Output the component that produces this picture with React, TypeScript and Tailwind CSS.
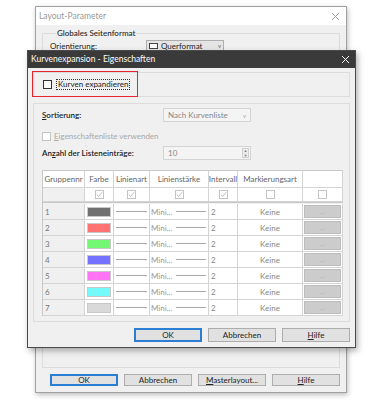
import type { ReactNode } from "react";

const font = { fontFamily: 'Lato, "Open Sans", sans-serif' };

function CloseX({ color }: { color: string }) {
  return (
    <svg width="9" height="9" viewBox="0 0 9 9">
      <path d="M1 1 L8 8 M8 1 L1 8" stroke={color} strokeWidth="1" />
    </svg>
  );
}

function Check({ checked = false, disabled = false }: { checked?: boolean; disabled?: boolean }) {
  return (
    <span
      className={
        "inline-flex h-[9px] w-[9px] shrink-0 items-center justify-center border bg-white " +
        (disabled ? "border-[#c4c4c4]" : "border-[#333333]")
      }
    >
      {checked && (
        <svg width="7" height="7" viewBox="0 0 7 7">
          <path d="M0.8 3.6 L2.7 5.4 L6.2 1.2" fill="none" stroke="#b4b4b4" strokeWidth="0.9" />
        </svg>
      )}
    </span>
  );
}

function Btn({ children, focus = false, className = "" }: { children: ReactNode; focus?: boolean; className?: string }) {
  return (
    <div
      className={
        "flex items-center justify-center bg-[#e1e1e1] text-[8px] text-[#222] " +
        (focus ? "border-2 border-[#2a7fd4] " : "border border-[#adadad] ") +
        className
      }
    >
      {children}
    </div>
  );
}

const swatches = ["#707070", "#ff7373", "#73f873", "#7373ff", "#ff73f5", "#73fbfb", "#d9d9d9"];
const cols = "grid grid-cols-[42px_29px_36px_59px_29px_65px_40px]";

function Table() {
  const cell = "border-r border-b border-[#d4d4d4]";
  return (
    <div className="w-[301px] border-l border-t border-[#c8c8c8] text-[8px] text-[#666]">
      <div className={cols + " h-[17px]"}>
        {["Gruppennr", "Farbe", "Linienart", "Linienstärke", "Intervall", "Markierungsart", ""].map((h, i) => (
          <div key={i} className={cell + " flex items-center justify-center overflow-hidden whitespace-nowrap bg-white"}>
            {h}
          </div>
        ))}
      </div>
      <div className={cols + " h-[15px] border-b border-[#c8c8c8]"}>
        <div className={cell + " bg-[#f0f0f0]"} />
        {[true, true, true, true, false, false].map((c, i) => (
          <div key={i} className={cell + " flex items-center justify-center bg-white"}>
            <Check checked={c} disabled />
          </div>
        ))}
      </div>
      <div className="h-[1px]" />
      {swatches.map((c, i) => (
        <div key={i} className={cols + " h-[16px]"}>
          <div className={cell + " flex items-center bg-[#f0f0f0] pl-[2px] text-[#777]"}>{i + 1}</div>
          <div className={cell + " flex items-center justify-center bg-white"}>
            <span className="h-[10px] w-[24px] border border-[#c8c8c8]" style={{ backgroundColor: c }} />
          </div>
          <div className={cell + " flex items-center bg-white px-[2px]"}>
            <span className="h-px w-full bg-[#a8a8a8]" />
          </div>
          <div className={cell + " flex items-center gap-[4px] bg-white pl-[1px] pr-[2px] text-[#999]"}>
            <span>Mini...</span>
            <span className="h-px flex-1 bg-[#a8a8a8]" />
          </div>
          <div className={cell + " flex items-center bg-white pl-[2px] text-[#888]"}>2</div>
          <div className={cell + " flex items-center justify-center bg-white text-[#888]"}>Keine</div>
          <div className={cell + " flex items-center justify-center bg-white px-[1px] py-[1px]"}>
            <span className="flex h-full w-full items-center justify-center border border-[#bdbdbd] bg-[#cccccc] text-[6px] text-[#aaa]">
              ...
            </span>
          </div>
        </div>
      ))}
    </div>
  );
}

export default function App() {
  return (
    <div className="relative h-[400px] w-[378px] overflow-hidden bg-white text-[8px] text-[#222]" style={font}>
      {/* back window */}
      <div className="absolute left-[35px] top-[6px] flex h-[387px] w-[312px] flex-col border border-[#a0a0a0] bg-[#f0f0f0] shadow-[1px_2px_5px_rgba(0,0,0,0.25)]">
        <div className="flex h-[18px] shrink-0 items-center justify-between bg-white pl-[3px] pr-[6px] text-[8.5px] text-[#999]">
          <span>Layout-Parameter</span>
          <CloseX color="#999" />
        </div>
        <fieldset className="mx-[6px] mt-[2px] flex h-[341px] flex-col border border-[#dcdcdc] px-[7px]">
          <legend className="ml-[6px] px-[1px] font-semibold text-[#333]">Globales Seitenformat</legend>
          <div className="mt-[1px] flex h-[11px] items-center leading-[10px]">
            <span className="w-[96px]">Orientierung:</span>
            <div className="flex h-[11px] w-[78px] items-center gap-[3px] border border-[#adadad] bg-[#e5e5e5] px-[2px]">
              <span className="h-[6px] w-[9px] border border-[#444] bg-white" />
              <span>Querformat</span>
              <span className="ml-auto text-[6px] text-[#666]">v</span>
            </div>
          </div>
          <div className="flex-1" />
          <div className="mb-[4px] flex h-[11px] items-center">
            <span className="w-[95px]">Nach Aktualisierung:</span>
            <div className="h-[11px] w-[174px] border border-[#d0d0d0] bg-[#f0f0f0]" />
            <Btn className="ml-[2px] h-[11px] w-[11px] !text-[6px]">—</Btn>
          </div>
        </fieldset>
        <div className="flex flex-1 items-center gap-[6px] pl-[14px]">
          <Btn focus className="h-[12px] w-[68px]">OK</Btn>
          <Btn className="h-[12px] w-[68px]">Abbrechen</Btn>
          <Btn className="h-[12px] w-[68px]">
            <span><u>M</u>asterlayout...</span>
          </Btn>
          <Btn className="h-[12px] w-[68px]">
            <span><u>H</u>ilfe</span>
          </Btn>
        </div>
      </div>

      {/* front window */}
      <div className="absolute left-[27px] top-[50px] flex h-[298px] w-[329px] flex-col border border-[#4a4a4a] bg-[#f0f0f0] shadow-[2px_3px_6px_rgba(0,0,0,0.3)]">
        <div className="flex h-[17px] shrink-0 items-center justify-between bg-[#3a3a3a] pl-[3px] pr-[5px] text-[8.5px] text-white">
          <span>Kurvenexpansion - Eigenschaften</span>
          <CloseX color="#fff" />
        </div>
        <div className="flex flex-1 flex-col px-[5px] pt-[4px]">
          <div className="flex h-[25px] items-center gap-[4px] border border-[#dcdcdc] pl-[9px]">
            <Check />
            <span className="border border-dotted border-[#333] px-[1px] leading-[9px]">
              Kurven expandieren
            </span>
          </div>
          <div className="mt-[6px] flex h-[219px] flex-col border border-[#dcdcdc] pl-[8px] pt-[4px]">
            <div className="flex h-[14px] items-center">
              <span className="w-[121px] font-semibold"><u>S</u>ortierung:</span>
              <div className="flex h-[14px] w-[88px] items-center justify-between border border-[#d4d4d4] bg-[#f4f4f4] pl-[4px] pr-[4px] text-[#888]">
                <span>Nach Kurvenliste</span>
                <span className="text-[6px] text-[#aaa]">v</span>
              </div>
            </div>
            <div className="mt-[10px] flex h-[8px] items-center gap-[3px] text-[#a8a8a8]">
              <Check disabled />
              <span><u>E</u>igenschaftenliste verwenden</span>
            </div>
            <div className="mt-[6px] flex h-[14px] items-center">
              <span className="w-[121px] font-semibold">An<u>z</u>ahl der Listeneinträge:</span>
              <div className="flex h-[14px] w-[88px] items-center justify-between border border-[#d4d4d4] bg-[#f4f4f4] pl-[4px] pr-[1px] text-[#888]">
                <span>10</span>
                <span className="flex h-[10px] w-[7px] flex-col items-center justify-center border border-[#d0d0d0] bg-[#ececec] text-[4px] leading-[5px] text-[#888]">
                  <span>▲</span>
                  <span>▼</span>
                </span>
              </div>
            </div>
            <div className="mt-[10px]">
              <Table />
            </div>
          </div>
          <div className="mt-[6px] flex justify-end gap-[6px]">
            <Btn focus className="h-[14px] w-[68px]">OK</Btn>
            <Btn className="h-[14px] w-[68px]">Abbrechen</Btn>
            <Btn className="h-[14px] w-[68px]">
              <span><u>H</u>ilfe</span>
            </Btn>
          </div>
        </div>
      </div>

      {/* red highlight annotation */}
      <div className="pointer-events-none absolute left-[32px] top-[71px] h-[26px] w-[106px] border-[1.5px] border-[#e3262f]" />
    </div>
  );
}
